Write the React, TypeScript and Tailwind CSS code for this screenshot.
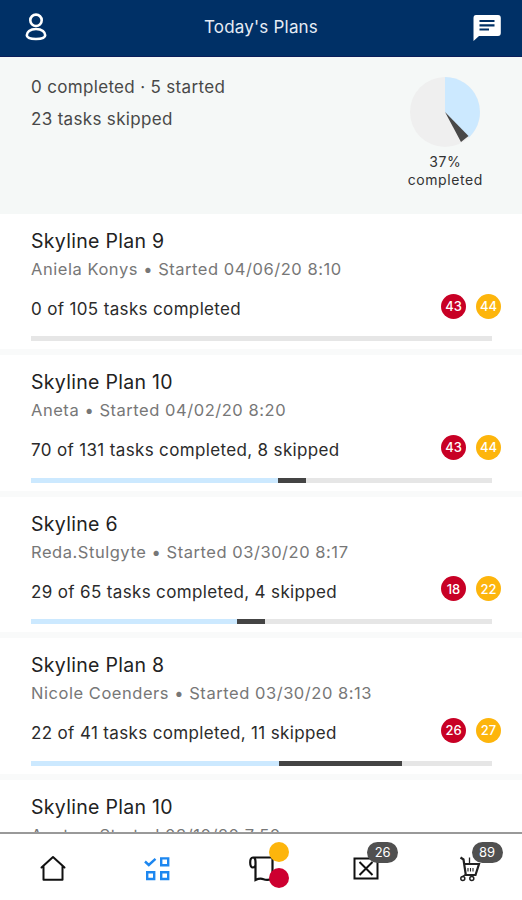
type Plan = {
  title: string
  meta: string
  tasks: string
  red: number
  yellow: number
  done: number
  skipped: number
}

// done / skipped are pixels on the 461px wide progress track
const TRACK = 461

const plans: Plan[] = [
  { title: 'Skyline Plan 9', meta: 'Aniela Konys • Started 04/06/20 8:10', tasks: '0 of 105 tasks completed', red: 43, yellow: 44, done: 0, skipped: 0 },
  { title: 'Skyline Plan 10', meta: 'Aneta • Started 04/02/20 8:20', tasks: '70 of 131 tasks completed, 8 skipped', red: 43, yellow: 44, done: 247, skipped: 28 },
  { title: 'Skyline 6', meta: 'Reda.Stulgyte • Started 03/30/20 8:17', tasks: '29 of 65 tasks completed, 4 skipped', red: 18, yellow: 22, done: 206, skipped: 28 },
  { title: 'Skyline Plan 8', meta: 'Nicole Coenders • Started 03/30/20 8:13', tasks: '22 of 41 tasks completed, 11 skipped', red: 26, yellow: 27, done: 247.5, skipped: 123.5 },
]

export default function App() {
  return (
    <div className="flex h-[900px] w-[522px] flex-col overflow-hidden bg-white font-['Inter',sans-serif] text-[#222]">
      <header className="flex h-[57px] shrink-0 items-center justify-between border-b border-[#0a1e5a] bg-[#003066] pr-[21px] pl-[24px] pb-[2px]">
        <UserIcon />
        <h1 className="pt-[2px] pl-px text-[17px] tracking-[0.2px] text-[#e6ecf5]">Today's Plans</h1>
        <ChatIcon />
      </header>
      <Summary />
      <main className="min-h-0 flex-1 overflow-hidden">
        {plans.map((plan, i) => <PlanCard key={i} plan={plan} />)}
        <article className="pt-[14px] pl-[31px]">
          <PlanHeading title="Skyline Plan 10" meta="Aneta • Started 03/10/20 7:50" />
        </article>
      </main>
      <TabBar />
    </div>
  )
}

function Summary() {
  return (
    <section className="flex h-[157px] shrink-0 justify-between bg-[#f5f8f7] pr-[39px] pl-[31px]">
      <div className="pt-[14px] text-[17px] leading-[32px] tracking-[0.33px] text-[#484848]">
        <p>0 completed · 5 started</p>
        <p>23 tasks skipped</p>
      </div>
      <div className="flex flex-col items-center pt-[20px] text-[14px] leading-[18px] tracking-[0.6px] text-[#333]">
        <svg width="70" height="70" viewBox="-35 -35 70 70" className="mb-[6px]">
          <circle r="35" fill="#efefef" />
          <path d="M0 0V-35A35 35 0 0 1 24 25.4Z" fill="#cce9ff" />
          <path d="M0 0L23.5 24L16 30Z" fill="#484848" />
        </svg>
        <span>37%</span>
        <span>completed</span>
      </div>
    </section>
  )
}

function PlanHeading({ title, meta }: { title: string; meta: string }) {
  return (
    <>
      <h2 className="text-[19.5px] leading-[26px] tracking-[0.3px] text-[#222]">{title}</h2>
      <p className="mt-[4px] text-[16.5px] leading-[22px] tracking-[0.54px] text-[#777]">{meta}</p>
    </>
  )
}

function PlanCard({ plan }: { plan: Plan }) {
  return (
    <article className="h-[141.4px] border-b-[6px] border-[#f9fafa] pt-[14px] pl-[31px]">
      <PlanHeading title={plan.title} meta={plan.meta} />
      <div className="mt-[12px] flex h-[32px] items-center justify-between pr-[21px]">
        <p className="mt-[3px] text-[17px] tracking-[0.35px] text-[#2b2b2b]">{plan.tasks}</p>
        <div className="mb-[4px] flex gap-[10px] text-[13px] font-medium text-white">
          <span className="flex size-[25px] items-center justify-center rounded-full bg-[#c80025] pt-px">{plan.red}</span>
          <span className="flex size-[25px] items-center justify-center rounded-full bg-[#fdb50c] pt-px">{plan.yellow}</span>
        </div>
      </div>
      <div className="mt-[12.4px] flex h-[5px] w-[461px] bg-[#e6e6e6]">
        <div className="bg-[#cce9ff]" style={{ width: `${(plan.done / TRACK) * 100}%` }} />
        <div className="bg-[#444]" style={{ width: `${(plan.skipped / TRACK) * 100}%` }} />
      </div>
    </article>
  )
}

function TabBar() {
  return (
    <nav className="grid h-[68px] shrink-0 grid-cols-5 border-t-2 border-[#999] bg-white">
      <div className="flex justify-center pt-[21px] pl-[2px]"><HomeIcon /></div>
      <div className="flex justify-center pt-[22px]"><ChecklistIcon /></div>
      <div className="relative flex justify-center pt-[21px] pl-[3px]">
        <PlanIcon />
        <span className="absolute top-[8px] left-[60px] size-[20px] rounded-full bg-[#fdb50c]" />
        <span className="absolute top-[34px] left-[60px] size-[20px] rounded-full bg-[#cd0030]" />
      </div>
      <div className="relative flex justify-center pt-[23px] pl-[2px]">
        <BoxIcon />
        <Badge count={26} />
      </div>
      <div className="relative flex justify-center pt-[22px]">
        <CartIcon />
        <Badge count={89} />
      </div>
    </nav>
  )
}

function Badge({ count }: { count: number }) {
  return (
    <span className="absolute top-[8px] left-[54px] flex h-[21px] w-[31px] items-center justify-center rounded-full bg-[#505050] text-[13px] text-white">{count}</span>
  )
}

function UserIcon() {
  return (
    <svg width="24" height="28" viewBox="0 0 24 28" fill="none" stroke="#fff" strokeWidth="2.6">
      <circle cx="12" cy="7.3" r="5.7" />
      <path d="M12 16C5.8 16 2.8 19.2 2.8 22.3C2.8 25 5 26 12 26S21.2 25 21.2 22.3C21.2 19.2 18.2 16 12 16Z" />
    </svg>
  )
}

function ChatIcon() {
  return (
    <svg width="28" height="27" viewBox="0 0 28 27">
      <path d="M3 1H25Q27.8 1 27.8 4V19Q27.8 22 25 22H6L.5 27V4Q.5 1 3 1Z" fill="#fff" />
      <path d="M6.5 7H21.5M6.5 11.3H21.5M6.5 15.5H16" stroke="#003066" strokeWidth="2.2" />
    </svg>
  )
}

function HomeIcon() {
  return (
    <svg width="26" height="27" viewBox="0 0 26 27" fill="none" stroke="#111" strokeWidth="2" strokeLinecap="round" strokeLinejoin="round">
      <path d="M1.5 12.5L13 2L24.5 12.5M3.5 11.5V24.8H22.5V11.5" />
    </svg>
  )
}

function ChecklistIcon() {
  return (
    <svg width="26" height="25" viewBox="0 0 26 25" fill="none" stroke="#1d87f0" strokeWidth="2.4">
      <path d="M1 5.5L4.8 9L11.5 2.8" />
      <path d="M17.2 2.4H24.2V9.2H17.2ZM3.2 16.2H10.2V23H3.2ZM17.2 16.2H24.2V23H17.2Z" />
    </svg>
  )
}

function PlanIcon() {
  return (
    <svg width="26" height="27" viewBox="0 0 26 27" fill="none" stroke="#111" strokeWidth="2.2">
      <path d="M4 2.5H23.5V24Q18 25.5 14.5 24.2T6.5 25V7Q6.5 2.5 4 2.5Q1.2 2.5 1.2 7.5T4 12.5Q5.5 12.5 6.5 10.5" />
    </svg>
  )
}

function BoxIcon() {
  return (
    <svg width="26" height="23" viewBox="0 0 26 23" fill="none" stroke="#111" strokeWidth="2">
      <path d="M1.5 1.5H24.5V21.5H1.5ZM6.5 5L19.5 18M19.5 5L6.5 18" />
    </svg>
  )
}

function CartIcon() {
  return (
    <svg width="22" height="27" viewBox="0 0 22 27" fill="none" stroke="#222">
      <path d="M1.5 1.5L4.5 3.5L6.8 19H16.5L20 8H5" strokeWidth="2.2" />
      <path d="M10.5 1.5V8" strokeWidth="1.3" />
      <path d="M9 12V15.5M11.5 12V15.5M14 12V15.5" strokeWidth="1.1" />
      <path d="M6.5 18.5L3 21" strokeWidth="1.5" />
      <circle cx="3.8" cy="22.6" r="2" strokeWidth="1.5" />
      <circle cx="12.8" cy="22.6" r="2" strokeWidth="1.5" />
    </svg>
  )
}
